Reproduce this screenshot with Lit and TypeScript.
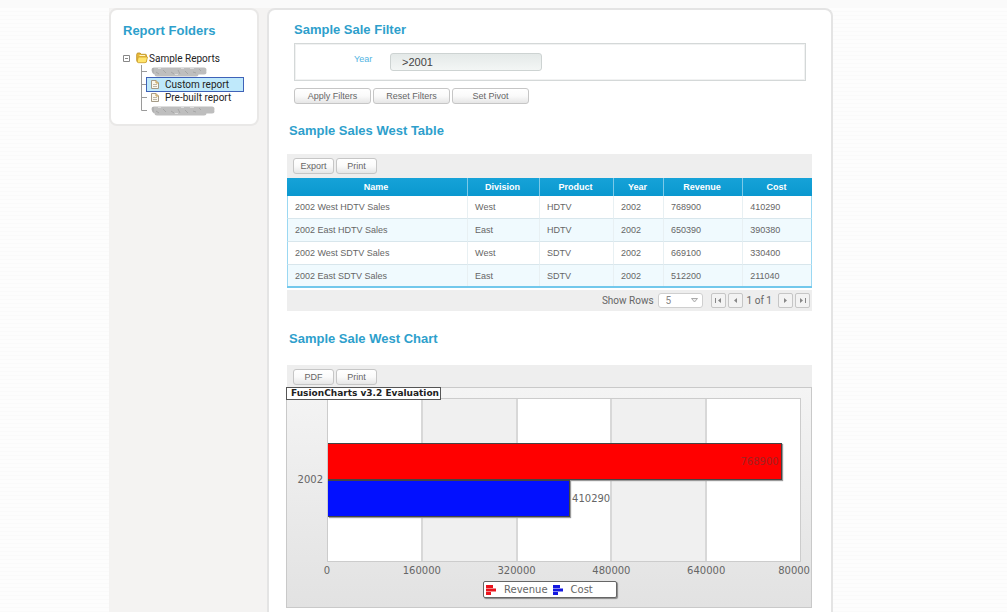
import { LitElement, html, css, svg } from "lit";
import { customElement } from "lit/decorators.js";

const shared = css`
  * { box-sizing: border-box; }
  h2 {
    margin: 0;
    font-size: 13px;
    line-height: 16px;
    font-weight: 600;
    font-family: "Liberation Sans", Arial, sans-serif;
    color: #2e9fcc;
  }
  button {
    height: 16px;
    padding: 0;
    border: 1px solid #c6c6c6;
    border-radius: 3px;
    background: linear-gradient(#ffffff 0%, #fafafa 50%, #e6e6e6 100%);
    color: #666;
    font: 9px/14px "Liberation Sans", Arial, sans-serif;
  }
  .toolbar {
    display: flex;
    gap: 2px;
    padding: 4px 6px;
    height: 24px;
    background: #eeeeee;
  }
  .toolbar button { width: 41px; }
`;

@customElement("report-tree")
export class ReportTree extends LitElement {
  static styles = [shared, css`
    :host {
      display: block;
      height: 118px;
      padding: 13px 12px;
      border: 2px solid #e9e8e7;
      border-radius: 8px;
      background: #fff;
      font: 10px/13px Roboto, "Liberation Sans", sans-serif;
      color: #222;
    }
    .root { display: flex; align-items: center; height: 14px; margin-top: 12px; }
    .toggle {
      display: block;
      width: 7px;
      height: 7px;
      border: 0;
      border-radius: 0;
      background: none;
    }
    .toggle svg { display: block; }
    .folder { margin: 0 1px 0 6px; }
    ul { list-style: none; margin: 0; padding: 0 0 0 18px; }
    li { display: flex; align-items: center; height: 13px; }
    .branch { flex: none; display: block; }
    .item {
      display: flex;
      align-items: center;
      gap: 6px;
      width: 96px;
      height: 13px;
      padding-left: 4px;
      color: #222;
      text-decoration: none;
      white-space: nowrap;
    }
    .item.selected { background: #bfe9fb; outline: 1px solid #3f62b8; }
    .smudge { margin-left: 4px; display: block; }
  `];

  private branch(last = false) {
    return html`<svg class="branch" width="6" height="13"><path d=${last ? "M.5 0V6.5H6" : "M.5 0V13M.5 6.5H6"} fill="none" stroke="#9a9a9a"/></svg>`;
  }
  private page() {
    return html`<svg width="8" height="9" viewBox="0 0 8 9"><path d="M.5.5H5L7.500 3V8.500H.5Z" fill="#fbf8ee" stroke="#a59b87"/><path d="M5 .5V3H7.500" fill="none" stroke="#c79d4a"/><path d="M2 4.500H6M2 6.500H6" stroke="#bdb7a8"/></svg>`;
  }
  private smudge(width: number) {
    return html`<svg class="smudge" width=${width} height="11" viewBox="0 0 ${width} 11">
      <path d="M3 4H${width - 4}M4 6H${width - 4}M6 8H${width - 12}" stroke="#bebebe" stroke-width="5" stroke-linecap="round"/>
      <path d="M2 2V7M5 6l3 2M12 4l3 3M20 6l3 2M27 4l2 4M34 5l3 3M42 6l3 1M48 3l2 2" fill="none" stroke="#a6a6a6"/>
      <path d="M7 2.500h3M16 1.500h4M24 8.500h3M30 2.500h3M39 2.500h4" stroke="#dcdcdc"/>
    </svg>`;
  }

  render() {
    return html`
      <h2>Report Folders</h2>
      <div class="root">
        <button class="toggle" aria-label="Collapse Sample Reports"><svg width="7" height="7"><path d="M.5.5H6.500V6.500H.5ZM2 3.500H5" fill="none" stroke="#888"/></svg></button>
        <svg class="folder" width="12" height="12" viewBox="0 0 12 12"><path d="M.7 2.500Q.7 1 2 1H4L5.500 2.300H9.500Q10.500 2.300 10.500 3.500V10H2Q.7 10 .7 8.500Z" fill="#e8b93a" stroke="#b98a1d" stroke-width=".8"/><path d="M2.300 5H11.600L10.400 9.500Q10.200 10.700 9 10.700H2.500Q1 10.500 1.300 9Z" fill="#ffe46b" stroke="#c79a28" stroke-width=".7"/><path d="M3.500 3.500H9" stroke="#fff7c8"/></svg>
        <span>Sample Reports</span>
      </div>
      <ul>
        <li>${this.branch()}${this.smudge(57)}</li>
        <li>${this.branch()}<a class="item selected" href="#custom">${this.page()}Custom report</a></li>
        <li>${this.branch()}<a class="item" href="#prebuilt">${this.page()}Pre-built report</a></li>
        <li>${this.branch(true)}${this.smudge(65)}</li>
      </ul>`;
  }
}

@customElement("sale-filter")
export class SaleFilter extends LitElement {
  static styles = [shared, css`
    :host { display: block; padding: 0 6px 0 7px; }
    .box {
      display: flex;
      margin-top: 5px;
      height: 38px;
      padding: 9px 0 0 59px;
      border: 1px solid #d4d8d8;
      box-shadow: inset 0 0 0 1px #f1f2f2;
    }
    label { width: 36px; font: 9px/12px "Liberation Sans", Arial, sans-serif; color: #52b4e2; }
    input {
      width: 152px;
      height: 18px;
      padding: 0 11px;
      border: 1px solid #cdd3d2;
      border-radius: 3px;
      background: linear-gradient(#e4e9e8, #f3f6f5);
      font: 11px/16px "Liberation Sans", Arial, sans-serif;
      color: #444;
    }
    .actions { display: flex; gap: 2px; margin-top: 7px; }
    .actions button { width: 77px; }
  `];
  render() {
    return html`
      <h2>Sample Sale Filter</h2>
      <div class="box"><label for="year">Year</label><input id="year" type="text" value="&gt;2001"></div>
      <div class="actions"><button>Apply Filters</button><button>Reset Filters</button><button>Set Pivot</button></div>`;
  }
}

@customElement("sales-table")
export class SalesTable extends LitElement {
  static styles = [shared, css`
    :host { display: block; }
    h2 { padding-left: 2px; margin-bottom: 15px; }
    table {
      width: 100%;
      table-layout: fixed;
      border-collapse: separate;
      border-spacing: 0;
      border-bottom: 2px solid #72c8ec;
      font: 9px/12px "Liberation Sans", Arial, sans-serif;
      color: #666;
    }
    th { height: 18px; padding: 0 2px 0 0; background: linear-gradient(#16a2d8, #0a98cf); color: #fff; font-weight: 700; }
    td { height: 23px; padding: 0 0 0 7px; border-top: 1px solid #d8e6ec; }
    tr:nth-child(odd) td { background: #fff; }
    tr:nth-child(even) td { background: #f0fafe; }
    th + th { border-left: 1px solid #7cc9e8; }
    td + td { border-left: 1px solid #e8f0f3; }
    td:first-child { border-left: 1px solid #9bd8f2; }
    td:last-child { border-right: 1px solid #9bd8f2; }
    tbody tr:first-child td { border-top: 0; height: 22px; }
    tbody tr:last-child td { height: 22px; }
    .name { width: 34.3%; }
    .division { width: 13.7%; }
    .product { width: 14.1%; }
    .year { width: 9.5%; }
    .revenue { width: 15.1%; }
    .pager {
      display: flex;
      align-items: center;
      justify-content: flex-end;
      height: 21px;
      margin-top: 2px;
      padding-right: 2px;
      background: #eeeeee;
      font: 10px/12px Roboto, "Liberation Sans", sans-serif;
      color: #666;
    }
    .rows { display: grid; width: 45px; height: 15px; margin: 0 6px 0 4px; }
    .rows > * { grid-area: 1 / 1; }
    .rows svg { align-self: center; justify-self: end; margin-right: 5px; pointer-events: none; }
    select {
      appearance: none;
      width: 45px;
      height: 15px;
      padding: 0 7px;
      border: 1px solid #cfcfcf;
      border-radius: 3px;
      background: #fff;
      color: #888;
      font: 10px/13px Roboto, "Liberation Sans", sans-serif;
    }
    .pager button { width: 15px; height: 15px; margin-left: 2px; border-radius: 2px; display: grid; place-items: center; background: #f3f3f3; }
    .count { margin: 1px 4px 0 4px; }
  `];
  private rows = [
    ["2002 West HDTV Sales", "West", "HDTV", 2002, 768900, 410290],
    ["2002 East HDTV Sales", "East", "HDTV", 2002, 650390, 390380],
    ["2002 West SDTV Sales", "West", "SDTV", 2002, 669100, 330400],
    ["2002 East SDTV Sales", "East", "SDTV", 2002, 512200, 211040],
  ];
  private arrow(label: string, d: string) {
    return html`<button aria-label=${label}><svg width="7" height="7"><path d=${d} fill="#888"/></svg></button>`;
  }
  render() {
    return html`
      <h2>Sample Sales West Table</h2>
      <div class="toolbar"><button>Export</button><button>Print</button></div>
      <table>
        <thead><tr>
          <th class="name">Name</th><th class="division">Division</th><th class="product">Product</th>
          <th class="year">Year</th><th class="revenue">Revenue</th><th>Cost</th>
        </tr></thead>
        <tbody>${this.rows.map(r => html`<tr>${r.map(c => html`<td>${c}</td>`)}</tr>`)}</tbody>
      </table>
      <div class="pager">
        <label for="count">Show Rows</label>
        <div class="rows"><select id="count"><option>5</option></select>
          <svg width="7" height="5"><path d="M.5.5H6.500L3.500 4Z" fill="#eee" stroke="#aaa"/></svg></div>
        ${this.arrow("First page", "M0 1H1V6H0ZM6 1V6L3 3.5Z")}
        ${this.arrow("Previous page", "M5 1V6L2 3.5Z")}
        <span class="count">1 of 1</span>
        ${this.arrow("Next page", "M2 1V6L5 3.5Z")}
        ${this.arrow("Last page", "M1 1V6L4 3.5ZM6 1H7V6H6Z")}
      </div>`;
  }
}

@customElement("sales-chart")
export class SalesChart extends LitElement {
  static styles = [shared, css`
    :host { display: block; }
    h2 { padding-left: 2px; margin-bottom: 18px; }
    .toolbar { height: 22px; }
    .chart {
      position: relative;
      height: 221px;
      margin-left: -1px;
      padding: 10px 10px 0 0;
      border: 1px solid #c9c9c9;
      background: linear-gradient(#f4f4f4, #e2e2e2);
      font: 10px/12px "DejaVu Sans", Verdana, sans-serif;
      color: #666;
    }
    .tag {
      position: absolute;
      top: -1px;
      left: -1px;
      padding: 0 1px 0 4px;
      border: 1px solid #555;
      background: #fff;
      color: #222;
      font: bold 9px/11px "DejaVu Sans", Verdana, sans-serif;
    }
    .plot { display: grid; grid-template-columns: 40px 1fr; }
    .category { align-self: center; text-align: right; padding-right: 4px; }
    .area { display: grid; height: 164px; border: 1px solid #ccc; }
    .area > * { grid-area: 1 / 1; }
    .bands { display: flex; }
    .bands span { flex: 1; background: #fff; }
    .bands span + span { border-left: 2px solid #d8d8d8; }
    .bands span:nth-child(even) { background: #f0f0f0; }
    .bars { align-self: center; z-index: 1; }
    .row { display: flex; align-items: center; }
    .bar {
      display: flex;
      align-items: center;
      justify-content: flex-end;
      height: 37px;
      padding-right: 2px;
      border: 1px solid #444;
      border-left: 0;
      box-shadow: 1px 1px 1px #999;
    }
    .bar.red { background: #f00; color: #a32020; }
    .bar.blue { background: #0210ff; }
    .value { margin-left: 2px; }
    .axis { display: flex; justify-content: space-between; margin-left: 40px; margin-top: 3px; }
    .axis span { width: 0; display: flex; justify-content: center; }
    .axis span:last-child { width: 9px; margin-right: -9px; justify-content: flex-end; }
    .legend {
      display: flex;
      align-items: center;
      width: 134px;
      height: 17px;
      margin: 4px auto 0 196px;
      padding-left: 2px;
      border: 1px solid #666;
      border-radius: 2px;
      background: #fff;
      box-shadow: 1px 1px 1px #888;
    }
    .legend svg { margin-right: 8px; }
    .legend svg + span + svg { margin-left: 5px; }
  `];
  private max = 800000;
  private series = [
    { name: "Revenue", value: 768900, tone: "red", color: "#e8141c" },
    { name: "Cost", value: 410290, tone: "blue", color: "#1418e0" },
  ];
  private ticks = ["0", "160000", "320000", "480000", "640000", "80000"];
  private bar(s: { value: number; tone: string }) {
    const share = s.value / this.max;
    const inside = share > 0.9;
    return html`<div class="row"><div class="bar ${s.tone}" style="width:${share * 100}%">${inside ? s.value : ""}</div>${inside ? "" : html`<span class="value">${s.value}</span>`}</div>`;
  }
  render() {
    return html`
      <h2>Sample Sale West Chart</h2>
      <div class="toolbar"><button>PDF</button><button>Print</button></div>
      <div class="chart">
        <div class="plot">
          <span class="category">2002</span>
          <div class="area">
            <div class="bands">${this.ticks.slice(1).map(() => html`<span></span>`)}</div>
            <div class="bars">${this.series.map(s => this.bar(s))}</div>
          </div>
        </div>
        <div class="axis">${this.ticks.map(t => html`<span>${t}</span>`)}</div>
        <div class="legend">${this.series.map(s => html`<svg width="10" height="10">${svg`<path d="M0 0H7V3H0ZM0 3.500H10V6.500H0ZM0 7H5V10H0Z" fill=${s.color}/>`}</svg><span>${s.name}</span>`)}</div>
        <div class="tag">FusionCharts v3.2 Evaluation</div>
      </div>`;
  }
}

@customElement("app-root")
export class AppRoot extends LitElement {
  static styles = css`
    * { box-sizing: border-box; }
    :host {
      display: flex;
      min-height: 100vh;
      box-sizing: border-box;
      padding: 8px 174px 0 109px;
      background:
        linear-gradient(#fafafa, #fafafa) 0 0 / 100% 8px no-repeat,
        repeating-linear-gradient(#fdfdfd 0 3px, #fafafa 3px 4px);
    }
    .shell {
      flex: 1;
      display: grid;
      grid-template-columns: 150px minmax(0, 1fr);
      gap: 8px;
      background: linear-gradient(90deg, #f4f3f2 98%, transparent 98%);
    }
    .side { min-width: 0; }
    .main {
      padding: 12px 19px 2px 18px;
      border: 2px solid #e4e4e4;
      border-bottom: 0;
      border-radius: 8px 8px 0 0;
      background: #fff;
    }
    sales-table { margin-top: 19px; }
    sales-chart { margin-top: 20px; }
  `;
  render() {
    return html`<div class="shell">
      <aside class="side"><report-tree></report-tree></aside>
      <main class="main"><sale-filter></sale-filter><sales-table></sales-table><sales-chart></sales-chart></main>
    </div>`;
  }
}
